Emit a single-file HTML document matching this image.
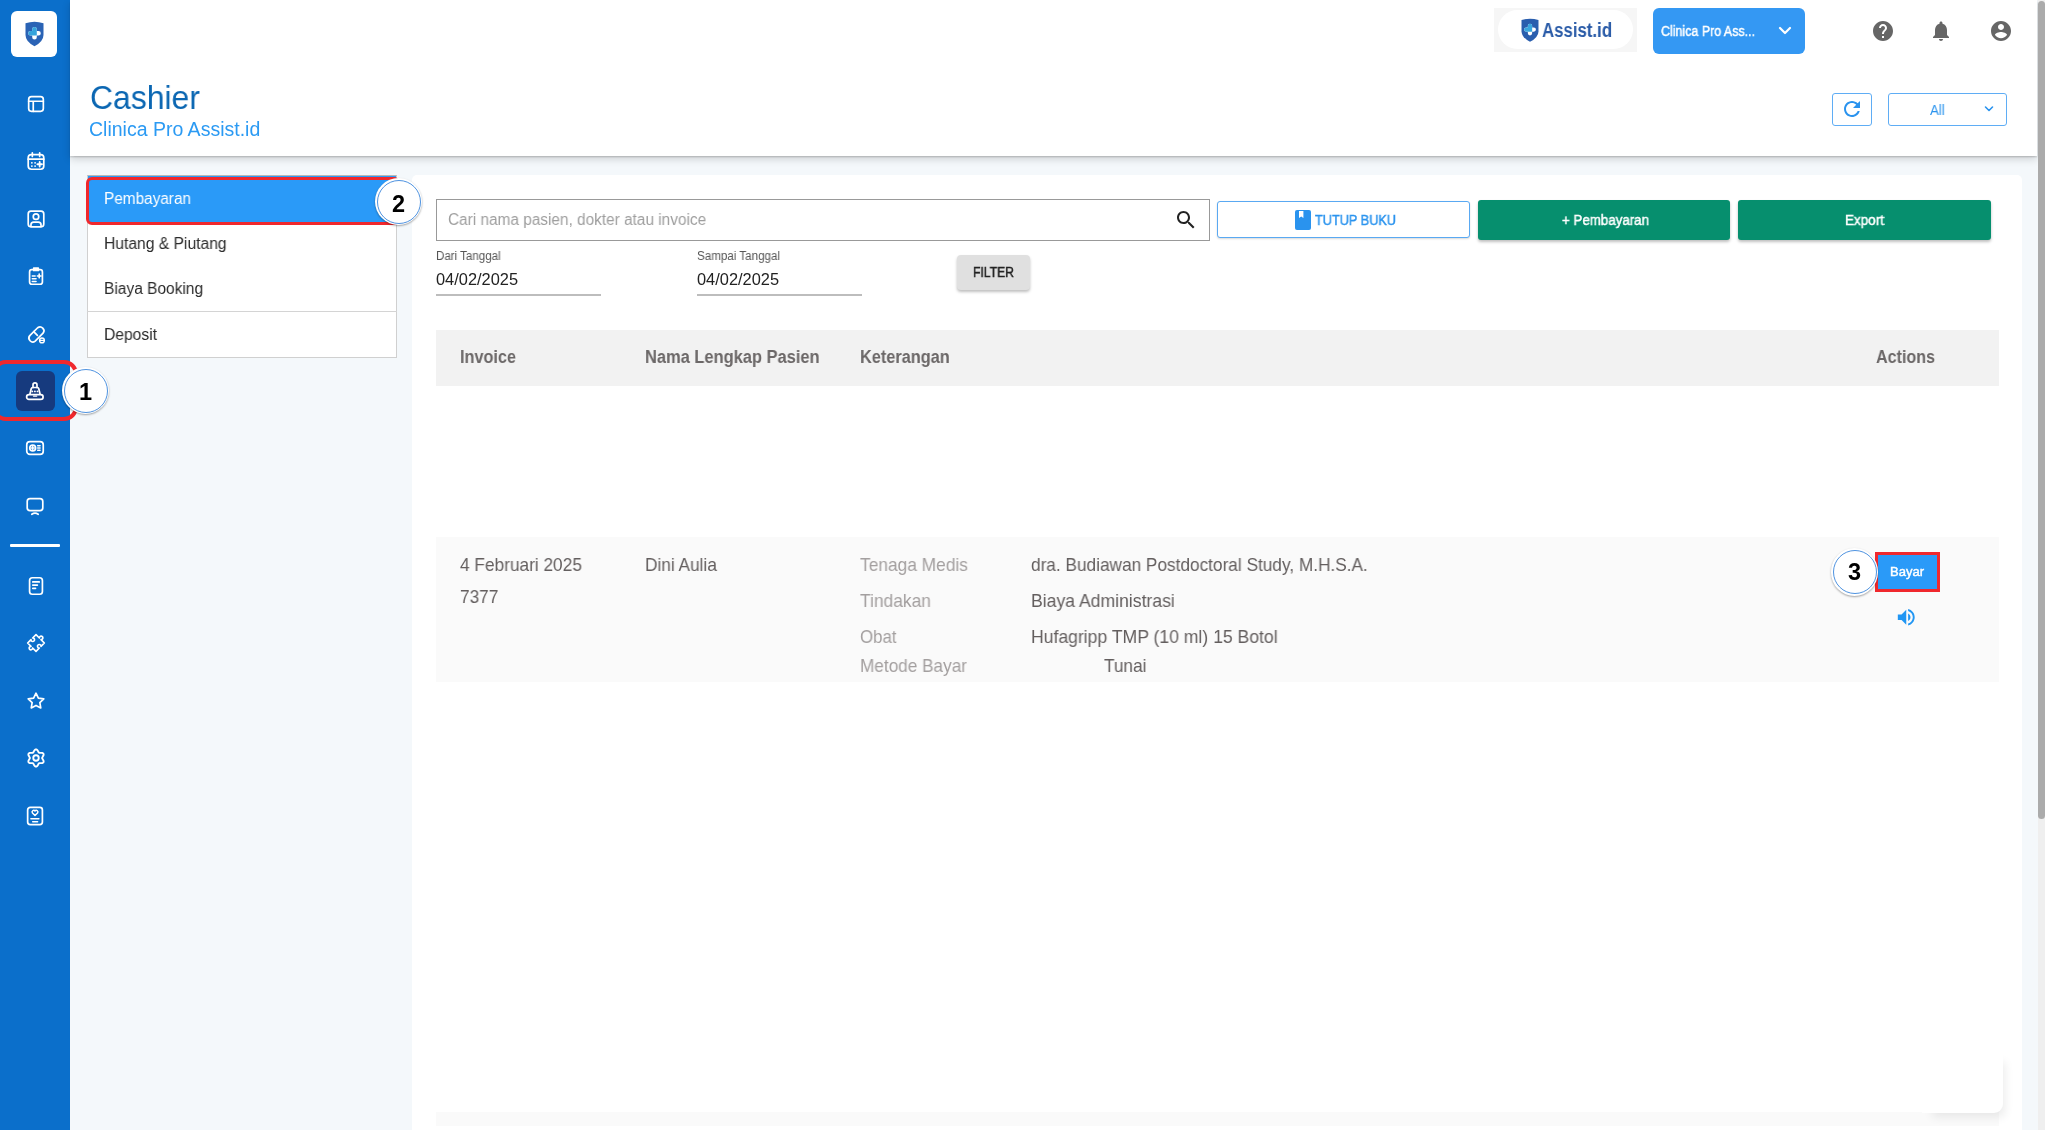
<!DOCTYPE html>
<html><head><meta charset="utf-8">
<style>
*{box-sizing:border-box;margin:0;padding:0}
html,body{width:2048px;height:1130px;overflow:hidden}
body{font-family:"Liberation Sans",sans-serif;background:#f4f8fb;position:relative}
.abs{position:absolute}
.t{position:absolute;white-space:nowrap;line-height:1;will-change:transform}
</style></head><body>
<div class="abs" style="left:0px;top:0px;width:70px;height:1130px;background:#0b6fcb"></div>
<div class="abs" style="left:11px;top:11px;width:46px;height:46px;background:#fff;border-radius:6px"></div>
<svg class="abs" style="left:24px;top:21px" width="21" height="26" viewBox="0 0 21 26">
<path d="M1.5 2.2 Q10.5 -0.8 19.5 2.2 L19.5 14 Q19.5 20.5 10.5 25.3 Q1.5 20.5 1.5 14 Z" fill="#2a63b5"/>
<path d="M8.2 8.3a2.3 2.3 0 0 1 4.6 0V10H14.5a2.3 2.3 0 0 1 0 4.6H12.8V16.3a2.3 2.3 0 0 1-4.6 0V14.6H6.5a2.3 2.3 0 0 1 0-4.6H8.2Z" fill="#fff"/>
<path d="M8.2 8.3a2.3 2.3 0 0 1 4.6 0V14.6H6.5a2.3 2.3 0 0 1 0-4.6H8.2Z" fill="#35a4dc"/>
</svg>
<div class="abs" style="left:16px;top:371px;width:39px;height:40px;background:#163a7e;border-radius:6px"></div>
<div class="abs" style="left:-8px;top:360px;width:86px;height:61px;border:4px solid #f0282d;border-radius:14px"></div>
<svg class="abs" style="left:24.8px;top:92.7px" width="22" height="22" viewBox="0 0 24 24" fill="none" stroke="#fff" stroke-width="1.85" stroke-linecap="round" stroke-linejoin="round"><rect x="4" y="4" width="16" height="16" rx="3"/><path d="M4 9h16M9 9v11"/></svg>
<svg class="abs" style="left:24.7px;top:150.0px" width="22" height="22" viewBox="0 0 24 24" fill="none" stroke="#fff" stroke-width="1.85" stroke-linecap="round" stroke-linejoin="round"><rect x="3.5" y="5" width="17" height="16" rx="3.5"/><path d="M3.5 10h17M8 3v4M16 3v4"/><path d="M7.5 14h.01M11 14h.01M7.5 17.5h.01M11 17.5h.01M16 13v5M13.5 15.5h5" stroke-width="2"/></svg>
<svg class="abs" style="left:24.6px;top:208.0px" width="22" height="22" viewBox="0 0 24 24" fill="none" stroke="#fff" stroke-width="1.85" stroke-linecap="round" stroke-linejoin="round"><rect x="3.5" y="3.5" width="17" height="17" rx="3"/><circle cx="12" cy="9.5" r="3"/><path d="M6.5 20v-1.5a3 3 0 0 1 3-3h5a3 3 0 0 1 3 3V20"/></svg>
<svg class="abs" style="left:24.6px;top:265.4px" width="22" height="22" viewBox="0 0 24 24" fill="none" stroke="#fff" stroke-width="1.85" stroke-linecap="round" stroke-linejoin="round"><rect x="5" y="5" width="14" height="16" rx="2.5"/><path d="M9.5 3.5h5v2.5h-5z"/><path d="M8 12h3M8 15h4M8 18h4M15.5 10v4M13.5 12h4" stroke-width="1.8"/></svg>
<svg class="abs" style="left:25.0px;top:322.6px" width="22" height="22" viewBox="0 0 24 24" fill="none" stroke="#fff" stroke-width="1.85" stroke-linecap="round" stroke-linejoin="round"><path d="M5.2 13.8l8.6-8.6a4.2 4.2 0 0 1 5.9 5.9l-8.6 8.6a4.2 4.2 0 0 1-5.9-5.9z"/><path d="M9.5 9.5l4 4"/><circle cx="18.5" cy="19" r="2.6" stroke-width="1.5"/><path d="M16.5 19h4" stroke-width="1.2"/></svg>
<svg class="abs" style="left:22.9px;top:379.0px" width="24" height="24" viewBox="0 0 24 24" fill="none" stroke="#fff" stroke-width="1.85" stroke-linecap="round" stroke-linejoin="round"><path d="M10 8.5V5.9a2 2 0 0 1 4 0V8.5" stroke-width="1.7"/><path d="M6.9 15.2L8.2 9.7Q8.5 8.5 9.7 8.5H14.3Q15.5 8.5 15.8 9.7L17.1 15.2" stroke-width="1.7"/><path d="M9.3 12.4h.01M11.9 12.4h.01M14.5 12.4h.01" stroke-width="1.9"/><rect x="3.6" y="15.6" width="16.5" height="4.7" rx="2.35" stroke-width="1.7"/><path d="M10.5 17.1h3.2" stroke-width="1.3"/></svg>
<svg class="abs" style="left:24.4px;top:437.4px" width="22" height="22" viewBox="0 0 24 24" fill="none" stroke="#fff" stroke-width="1.85" stroke-linecap="round" stroke-linejoin="round"><rect x="3" y="5" width="18" height="14" rx="3.5"/><circle cx="9.5" cy="12" r="3.2"/><path d="M9.5 10.3v3.4M7.8 12h3.4" stroke-width="1.5"/><path d="M15 9.5h2.5M15 12h2.5M15 14.5h2.5" stroke-width="1.8"/></svg>
<svg class="abs" style="left:24.4px;top:495.0px" width="22" height="22" viewBox="0 0 24 24" fill="none" stroke="#fff" stroke-width="1.85" stroke-linecap="round" stroke-linejoin="round"><rect x="3.5" y="4" width="17" height="13" rx="3"/><path d="M8.5 21q3.5-2.5 7 0"/></svg>
<svg class="abs" style="left:24.6px;top:575.0px" width="22" height="22" viewBox="0 0 24 24" fill="none" stroke="#fff" stroke-width="1.85" stroke-linecap="round" stroke-linejoin="round"><rect x="5" y="3" width="14" height="18" rx="3"/><path d="M8.5 7.5h7M8.5 11h5M8.5 14.5h3"/></svg>
<svg class="abs" style="left:23.6px;top:631.2px" width="24" height="24" viewBox="0 0 24 24" fill="none" stroke="#fff" stroke-width="1.85" stroke-linecap="round" stroke-linejoin="round"><path stroke-width="1.65" d="M6.1 6.1H10.85A1.75 1.75 0 1 1 13.15 6.1H17.9V10.85A1.75 1.75 0 1 0 17.9 13.15V17.9H13.15A1.75 1.75 0 1 1 10.85 17.9H6.1V13.15A1.75 1.75 0 1 0 6.1 10.85Z" transform="rotate(45 12 12)"/></svg>
<svg class="abs" style="left:24.6px;top:689.6px" width="22" height="22" viewBox="0 0 24 24" fill="none" stroke="#fff" stroke-width="1.85" stroke-linecap="round" stroke-linejoin="round"><path d="M12 3.5l2.6 5.4 5.9.8-4.3 4.1 1 5.8L12 16.8l-5.2 2.8 1-5.8-4.3-4.1 5.9-.8z"/></svg>
<svg class="abs" style="left:23.5px;top:746.4px" width="24" height="24" viewBox="0 0 24 24" fill="none" stroke="#fff" stroke-width="1.85" stroke-linecap="round" stroke-linejoin="round"><path d="M18.10 12.00 L18.18 11.59 L18.41 11.16 L18.74 10.66 L19.10 10.10 L19.41 9.48 L19.61 8.85 L19.63 8.24 L19.45 7.70 L19.07 7.27 L18.53 6.99 L17.89 6.84 L17.20 6.80 L16.53 6.83 L15.94 6.87 L15.44 6.85 L15.05 6.72 L14.74 6.44 L14.47 6.03 L14.21 5.49 L13.90 4.90 L13.53 4.32 L13.07 3.84 L12.56 3.51 L12.00 3.40 L11.44 3.51 L10.93 3.84 L10.47 4.32 L10.10 4.90 L9.79 5.49 L9.53 6.03 L9.26 6.44 L8.95 6.72 L8.56 6.85 L8.06 6.87 L7.47 6.83 L6.80 6.80 L6.11 6.84 L5.47 6.99 L4.93 7.27 L4.55 7.70 L4.37 8.24 L4.39 8.85 L4.59 9.48 L4.90 10.10 L5.26 10.66 L5.59 11.16 L5.82 11.59 L5.90 12.00 L5.82 12.41 L5.59 12.84 L5.26 13.34 L4.90 13.90 L4.59 14.52 L4.39 15.15 L4.37 15.76 L4.55 16.30 L4.93 16.73 L5.47 17.01 L6.11 17.16 L6.80 17.20 L7.47 17.17 L8.06 17.13 L8.56 17.15 L8.95 17.28 L9.26 17.56 L9.53 17.97 L9.79 18.51 L10.10 19.10 L10.47 19.68 L10.93 20.16 L11.44 20.49 L12.00 20.60 L12.56 20.49 L13.07 20.16 L13.53 19.68 L13.90 19.10 L14.21 18.51 L14.47 17.97 L14.74 17.56 L15.05 17.28 L15.44 17.15 L15.94 17.13 L16.53 17.17 L17.20 17.20 L17.89 17.16 L18.53 17.01 L19.07 16.73 L19.45 16.30 L19.63 15.76 L19.61 15.15 L19.41 14.52 L19.10 13.90 L18.74 13.34 L18.41 12.84 L18.18 12.41Z" stroke-width="1.85"/><circle cx="12" cy="12" r="2.75" stroke-width="1.85"/></svg>
<svg class="abs" style="left:23.1px;top:803.7px" width="24" height="24" viewBox="0 0 24 24" fill="none" stroke="#fff" stroke-width="1.85" stroke-linecap="round" stroke-linejoin="round"><rect x="4.65" y="3.45" width="14.75" height="17.1" rx="2.6" stroke-width="1.7"/><path d="M12 11.5l-2.5-2.5a1.6 1.6 0 0 1 2.5-2.05 1.6 1.6 0 0 1 2.5 2.05z" stroke-width="1.5"/><path d="M7.9 14.7h8M9.7 17.7h4.9" stroke-width="1.5"/></svg>
<div class="abs" style="left:10px;top:544px;width:50px;height:3px;background:#fff;border-radius:1px"></div>
<div class="abs" style="left:70px;top:0px;width:1967px;height:156px;background:#fff;box-shadow:0 1.5px 1.5px rgba(0,0,0,.14),0 3px 8px rgba(0,0,0,.16)"></div>
<div class="t" style="left:90.0px;top:81.1px;font-size:33px;color:#0a66b2;transform:scaleX(0.967);transform-origin:0 0;">Cashier</div>
<div class="t" style="left:89.3px;top:119.5px;font-size:19.5px;color:#2b9af3;transform:scaleX(0.999);transform-origin:0 0;">Clinica Pro Assist.id</div>
<div class="abs" style="left:1494px;top:8px;width:143px;height:44px;background:#f6f6f6"></div>
<div class="abs" style="left:1498px;top:10px;width:135px;height:39px;background:#fff;border-radius:20px"></div>
<svg class="abs" style="left:1519.5px;top:17.5px" width="20" height="24.5" viewBox="0 0 21 26">
<path d="M1.5 2.2 Q10.5 -0.8 19.5 2.2 L19.5 14 Q19.5 20.5 10.5 25.3 Q1.5 20.5 1.5 14 Z" fill="#2a5eae"/>
<path d="M8.2 8.3a2.3 2.3 0 0 1 4.6 0V10H14.5a2.3 2.3 0 0 1 0 4.6H12.8V16.3a2.3 2.3 0 0 1-4.6 0V14.6H6.5a2.3 2.3 0 0 1 0-4.6H8.2Z" fill="#fff"/>
<path d="M8.2 8.3a2.3 2.3 0 0 1 4.6 0V14.6H6.5a2.3 2.3 0 0 1 0-4.6H8.2Z" fill="#3aa6de"/>
</svg>
<div class="t" style="left:1541.5px;top:20.1px;font-size:20px;color:#2b5ca8;font-weight:bold;transform:scaleX(0.840);transform-origin:0 0;">Assist.id</div>
<div class="abs" style="left:1653px;top:8px;width:152px;height:46px;background:#3498f3;border-radius:6px"></div>
<div class="t" style="left:1661.0px;top:24.1px;font-size:14px;color:#fff;-webkit-text-stroke:0.45px #fff;transform:scaleX(0.888);transform-origin:0 0;">Clinica Pro Ass...</div>
<svg class="abs" style="left:1777px;top:24px" width="16" height="14" viewBox="0 0 16 14" fill="none" stroke="#fff" stroke-width="2.2" stroke-linecap="round" stroke-linejoin="round"><path d="M3 4l5 5 5-5"/></svg>
<svg class="abs" style="left:1871px;top:19px" width="24" height="24" viewBox="0 0 24 24"><path fill="#666" d="M12 2C6.48 2 2 6.48 2 12s4.48 10 10 10 10-4.48 10-10S17.52 2 12 2zm1 17h-2v-2h2v2zm2.07-7.75l-.9.92C13.45 12.9 13 13.5 13 15h-2v-.5c0-1.1.45-2.1 1.17-2.83l1.24-1.26c.37-.36.59-.86.59-1.41 0-1.1-.9-2-2-2s-2 .9-2 2H8c0-2.21 1.79-4 4-4s4 1.79 4 4c0 .88-.36 1.68-.93 2.25z"/></svg>
<svg class="abs" style="left:1929px;top:19px" width="24" height="24" viewBox="0 0 24 24"><path fill="#666" d="M12 22c1.1 0 2-.9 2-2h-4c0 1.1.89 2 2 2zm6-6v-5c0-3.07-1.64-5.64-4.5-6.32V4c0-.83-.67-1.5-1.5-1.5s-1.5.67-1.5 1.5v.68C7.63 5.36 6 7.92 6 11v5l-2 2v1h16v-1l-2-2z"/></svg>
<svg class="abs" style="left:1988.5px;top:19px" width="24" height="24" viewBox="0 0 24 24"><path fill="#666" d="M12 2C6.48 2 2 6.48 2 12s4.48 10 10 10 10-4.48 10-10S17.52 2 12 2zm0 3c1.66 0 3 1.34 3 3s-1.34 3-3 3-3-1.34-3-3 1.34-3 3-3zm0 14.2c-2.5 0-4.71-1.28-6-3.22.03-1.99 4-3.08 6-3.08 1.99 0 5.97 1.09 6 3.08-1.29 1.94-3.5 3.22-6 3.22z"/></svg>
<div class="abs" style="left:1832px;top:93px;width:40px;height:33px;border:1px solid #5fadf5;border-radius:3px;background:#fff"></div>
<svg class="abs" style="left:1840px;top:97px" width="24" height="24" viewBox="0 0 24 24"><path fill="#2a93ee" d="M17.65 6.35C16.2 4.9 14.21 4 12 4c-4.42 0-7.99 3.58-7.99 8s3.57 8 7.99 8c3.73 0 6.84-2.55 7.73-6h-2.08c-.82 2.33-3.04 4-5.65 4-3.31 0-6-2.69-6-6s2.69-6 6-6c1.66 0 3.14.69 4.22 1.78L13 11h7V4l-2.35 2.35z"/></svg>
<div class="abs" style="left:1888px;top:93px;width:119px;height:33px;border:1px solid #5fadf5;border-radius:3px;background:#fff"></div>
<div class="t" style="left:1930.0px;top:102.9px;font-size:14px;color:#2a93ee;transform:scaleX(0.945);transform-origin:0 0;">All</div>
<svg class="abs" style="left:1983px;top:104px" width="12" height="10" viewBox="0 0 12 10" fill="none" stroke="#2a93ee" stroke-width="1.6" stroke-linecap="round" stroke-linejoin="round"><path d="M2.5 3l3.5 3.5 3.5-3.5"/></svg>
<div class="abs" style="left:87px;top:175px;width:310px;height:183px;background:#fff;border:1px solid #d0d0d0;border-top-color:#b8b8b8"></div>
<div class="abs" style="left:88px;top:176px;width:308px;height:46px;background:#2a9af8"></div>
<div class="abs" style="left:87px;top:311px;width:310px;height:1px;background:#d4d4d4"></div>
<div class="t" style="left:104.0px;top:190.5px;font-size:16px;color:#fff;transform:scaleX(0.959);transform-origin:0 0;">Pembayaran</div>
<div class="t" style="left:104.0px;top:235.5px;font-size:16px;color:#2b2b2b;transform:scaleX(0.977);transform-origin:0 0;">Hutang & Piutang</div>
<div class="t" style="left:104.0px;top:280.5px;font-size:16px;color:#2b2b2b;transform:scaleX(0.968);transform-origin:0 0;">Biaya Booking</div>
<div class="t" style="left:104.0px;top:326.5px;font-size:16px;color:#2b2b2b;transform:scaleX(0.977);transform-origin:0 0;">Deposit</div>
<div class="abs" style="left:86px;top:177px;width:314px;height:48px;border:3px solid #f0282d;border-radius:6px"></div>
<div class="abs" style="left:412px;top:175px;width:1610px;height:1000px;background:#fff;border-radius:5px"></div>
<div class="abs" style="left:436px;top:199px;width:774px;height:42px;border:1px solid #999;background:#fff"></div>
<div class="t" style="left:448.2px;top:212.0px;font-size:16px;color:#9e9e9e;transform:scaleX(0.961);transform-origin:0 0;">Cari nama pasien, dokter atau invoice</div>
<svg class="abs" style="left:1174px;top:208px" width="24" height="24" viewBox="0 0 24 24"><path fill="#222" d="M15.5 14h-.79l-.28-.27C15.41 12.59 16 11.11 16 9.5 16 5.91 13.09 3 9.5 3S3 5.91 3 9.5 5.91 16 9.5 16c1.61 0 3.09-.59 4.23-1.57l.27.28v.79l5 4.99L20.49 19l-4.99-5zm-6 0C7.01 14 5 11.99 5 9.5S7.01 5 9.5 5 14 7.01 14 9.5 11.99 14 9.5 14z"/></svg>
<div class="abs" style="left:1217px;top:201px;width:253px;height:37px;border:1.5px solid #5aa9f2;border-radius:3px;background:#fff;box-shadow:0 1px 2px rgba(0,0,0,.15)"></div>
<svg class="abs" style="left:1295px;top:210px" width="16" height="20" viewBox="0 0 16 20"><rect x="0" y="0" width="16" height="20" rx="2" fill="#2a93ee"/><path d="M4 1v7l2.2-1.6L8.4 8V1z" fill="#fff"/></svg>
<div class="t" style="left:1315.0px;top:213.1px;font-size:14px;color:#2a93ee;-webkit-text-stroke:0.45px #2a93ee;transform:scaleX(0.908);transform-origin:0 0;">TUTUP BUKU</div>
<div class="abs" style="left:1478px;top:200px;width:252px;height:40px;background:#068f6e;border-radius:3px;box-shadow:0 2px 3px rgba(0,0,0,.25)"></div>
<div class="t" style="left:1562.0px;top:213.1px;font-size:14px;color:#fff;-webkit-text-stroke:0.45px #fff;transform:scaleX(0.951);transform-origin:0 0;">+ Pembayaran</div>
<div class="abs" style="left:1738px;top:200px;width:253px;height:40px;background:#068f6e;border-radius:3px;box-shadow:0 2px 3px rgba(0,0,0,.25)"></div>
<div class="t" style="left:1845.0px;top:213.1px;font-size:14px;color:#fff;-webkit-text-stroke:0.45px #fff;transform:scaleX(0.964);transform-origin:0 0;">Export</div>
<div class="t" style="left:436.0px;top:250.1px;font-size:12px;color:#555;transform:scaleX(0.962);transform-origin:0 0;">Dari Tanggal</div>
<div class="t" style="left:436.0px;top:271.5px;font-size:16px;color:#222;transform:scaleX(1.024);transform-origin:0 0;">04/02/2025</div>
<div class="abs" style="left:436px;top:294px;width:165px;height:1.5px;background:#bdbdbd"></div>
<div class="t" style="left:696.5px;top:250.1px;font-size:12px;color:#555;transform:scaleX(0.967);transform-origin:0 0;">Sampai Tanggal</div>
<div class="t" style="left:696.5px;top:271.5px;font-size:16px;color:#222;transform:scaleX(1.024);transform-origin:0 0;">04/02/2025</div>
<div class="abs" style="left:696.5px;top:294px;width:165px;height:1.5px;background:#bdbdbd"></div>
<div class="abs" style="left:957px;top:255px;width:73px;height:35px;background:#e0e0e0;border-radius:4px;box-shadow:0 2px 3px rgba(0,0,0,.25)"></div>
<div class="t" style="left:973.0px;top:264.5px;font-size:14px;color:#222;-webkit-text-stroke:0.45px #222;transform:scaleX(0.869);transform-origin:0 0;">FILTER</div>
<div class="abs" style="left:436px;top:330px;width:1563px;height:56px;background:#f2f2f2"></div>
<div class="t" style="left:460.0px;top:348.2px;font-size:18px;color:#6b6767;font-weight:bold;transform:scaleX(0.903);transform-origin:0 0;">Invoice</div>
<div class="t" style="left:645.0px;top:348.2px;font-size:18px;color:#6b6767;font-weight:bold;transform:scaleX(0.914);transform-origin:0 0;">Nama Lengkap Pasien</div>
<div class="t" style="left:859.6px;top:348.2px;font-size:18px;color:#6b6767;font-weight:bold;transform:scaleX(0.906);transform-origin:0 0;">Keterangan</div>
<div class="t" style="left:1876.0px;top:348.2px;font-size:18px;color:#6b6767;font-weight:bold;transform:scaleX(0.894);transform-origin:0 0;">Actions</div>
<div class="abs" style="left:436px;top:537px;width:1563px;height:145px;background:#fafafa"></div>
<div class="t" style="left:459.5px;top:556.9px;font-size:17.8px;color:#635e5e;transform:scaleX(0.971);transform-origin:0 0;">4 Februari 2025</div>
<div class="t" style="left:459.5px;top:588.9px;font-size:17.8px;color:#635e5e;transform:scaleX(0.967);transform-origin:0 0;">7377</div>
<div class="t" style="left:645.0px;top:556.9px;font-size:17.8px;color:#635e5e;transform:scaleX(0.970);transform-origin:0 0;">Dini Aulia</div>
<div class="t" style="left:860.0px;top:556.9px;font-size:17.8px;color:#a39f9f;transform:scaleX(0.975);transform-origin:0 0;">Tenaga Medis</div>
<div class="t" style="left:860.0px;top:593.1px;font-size:17.8px;color:#a39f9f;transform:scaleX(0.979);transform-origin:0 0;">Tindakan</div>
<div class="t" style="left:860.0px;top:629.4px;font-size:17.8px;color:#a39f9f;transform:scaleX(0.949);transform-origin:0 0;">Obat</div>
<div class="t" style="left:860.0px;top:657.7px;font-size:17.8px;color:#a39f9f;transform:scaleX(0.966);transform-origin:0 0;">Metode Bayar</div>
<div class="t" style="left:1030.5px;top:556.9px;font-size:17.8px;color:#635e5e;transform:scaleX(0.969);transform-origin:0 0;">dra. Budiawan Postdoctoral Study, M.H.S.A.</div>
<div class="t" style="left:1030.5px;top:593.1px;font-size:17.8px;color:#635e5e;transform:scaleX(0.990);transform-origin:0 0;">Biaya Administrasi</div>
<div class="t" style="left:1030.5px;top:629.4px;font-size:17.8px;color:#635e5e;transform:scaleX(0.989);transform-origin:0 0;">Hufagripp TMP (10 ml) 15 Botol</div>
<div class="t" style="left:1104.4px;top:657.7px;font-size:17.8px;color:#635e5e;transform:scaleX(0.969);transform-origin:0 0;">Tunai</div>
<div class="abs" style="left:1875px;top:552px;width:65px;height:40px;background:#f0282d"></div>
<div class="abs" style="left:1878px;top:555px;width:59px;height:34px;background:#2a9af8"></div>
<div class="t" style="left:1889.5px;top:565.0px;font-size:13px;color:#fff;-webkit-text-stroke:0.45px #fff;transform:scaleX(0.987);transform-origin:0 0;">Bayar</div>
<svg class="abs" style="left:1894.8px;top:605.6px" width="22.5" height="22.5" viewBox="0 0 24 24"><path fill="#2196f3" d="M3 9v6h4l5 5V4L7 9H3zm13.5 3c0-1.77-1.02-3.29-2.5-4.03v8.05c1.48-.73 2.5-2.25 2.5-4.02zM14 3.23v2.06c2.89.86 5 3.54 5 6.71s-2.11 5.85-5 6.71v2.06c4.01-.91 7-4.49 7-8.77s-2.99-7.86-7-8.77z"/></svg>
<div class="abs" style="left:436px;top:1112px;width:1563px;height:14px;background:#fafafa"></div>
<div class="abs" style="left:1922px;top:1050px;width:81px;height:63px;background:#fff;border-radius:0 0 9px 0;box-shadow:6px 8px 10px -4px rgba(0,0,0,.08)"></div>
<div class="abs" style="left:61.7px;top:366.8px;width:47.6px;height:47.6px;border-radius:50%;background:#fff;box-shadow:0 1px 2px rgba(0,0,0,.35)"></div>
<div class="abs" style="left:63.5px;top:368.6px;width:44px;height:44px;border-radius:50%;border:1.2px solid #4f93e0"></div>
<div class="t" style="left:78.9px;top:381.2px;font-size:23.5px;color:#000;font-weight:bold;">1</div>
<div class="abs" style="left:374.7px;top:177.89999999999998px;width:47.6px;height:47.6px;border-radius:50%;background:#fff;box-shadow:0 1px 2px rgba(0,0,0,.35)"></div>
<div class="abs" style="left:376.5px;top:179.7px;width:44px;height:44px;border-radius:50%;border:1.2px solid #4f93e0"></div>
<div class="t" style="left:391.9px;top:192.8px;font-size:23.5px;color:#000;font-weight:bold;">2</div>
<div class="abs" style="left:1830.7px;top:548.2px;width:47.6px;height:47.6px;border-radius:50%;background:#fff;box-shadow:0 1px 2px rgba(0,0,0,.35)"></div>
<div class="abs" style="left:1832.5px;top:550px;width:44px;height:44px;border-radius:50%;border:1.2px solid #4f93e0"></div>
<div class="t" style="left:1847.9px;top:561.1px;font-size:23.5px;color:#000;font-weight:bold;">3</div>
<div class="abs" style="left:2037.5px;top:0px;width:7.5px;height:1130px;background:#efefef"></div>
<div class="abs" style="left:2045px;top:0px;width:3px;height:1130px;background:#fff"></div>
<div class="abs" style="left:2037.5px;top:1px;width:7.5px;height:818px;background:#ababab;border-radius:4px"></div>
</body></html>
